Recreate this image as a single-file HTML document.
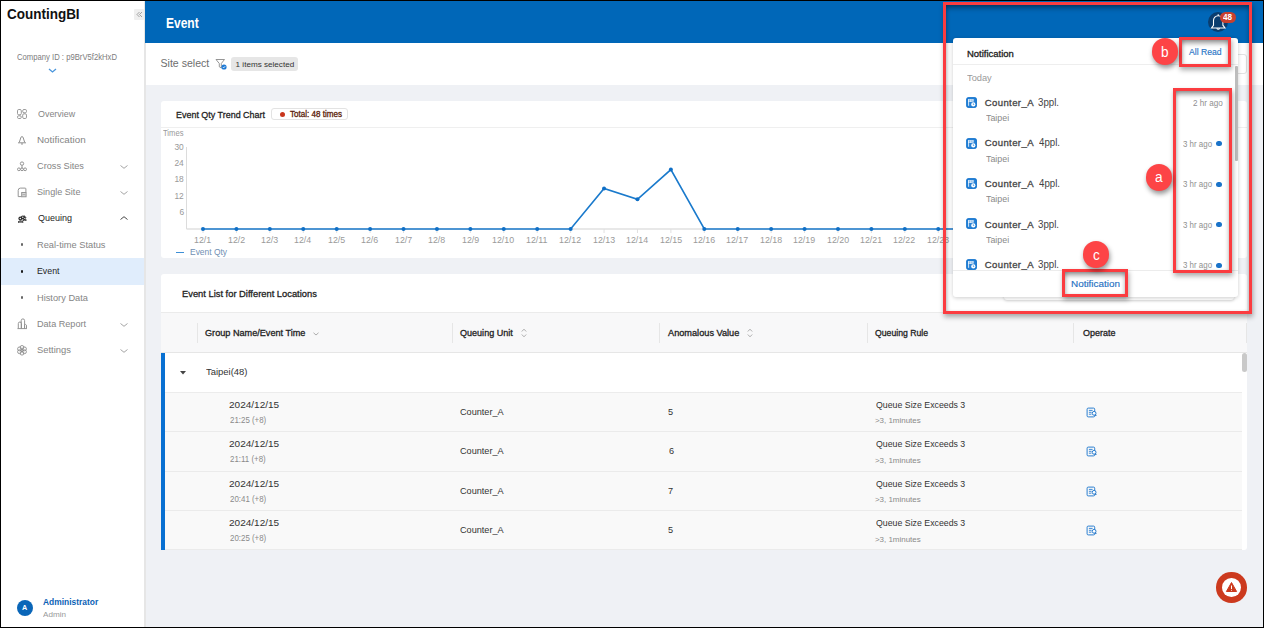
<!DOCTYPE html>
<html><head><meta charset="utf-8"><style>
html,body{margin:0;padding:0;width:1264px;height:628px;overflow:hidden;background:#fff}
.a{position:absolute}
.t{position:absolute;line-height:1;white-space:nowrap;font-family:"Liberation Sans",sans-serif;transform-origin:0 0}
</style></head><body>
<div class="a" style="left:1.00px;top:1.00px;width:143.00px;height:626.00px;background:#fff"></div>
<div class="a" style="left:144.00px;top:1.00px;width:2.00px;height:626.00px;background:#e6e6e6"></div>
<div class="t" style="left:6.89px;top:7px;font-size:14.783px;color:#111;font-weight:700;transform:scaleX(0.9128);">CountingBI</div>
<div class="a" style="left:134.00px;top:9.00px;width:10.00px;height:11.00px;background:#efefef;border-radius:1px"></div>
<svg class="a" style="left:136px;top:11px" width="7" height="7" viewBox="0 0 7 7"><path d="M3.5 1 L1 3.5 L3.5 6 M6 1 L3.5 3.5 L6 6" fill="none" stroke="#9a9a9a" stroke-width="0.9"/></svg>
<div class="t" style="left:16.80px;top:53px;font-size:8.696px;color:#7d7d7d;font-weight:400;transform:scaleX(0.8850);">Company ID : p9BrV5f2kHxD</div>
<svg class="a" style="left:48px;top:68px" width="9" height="5" viewBox="0 0 9 5"><path d="M1 1 L4.5 4 L8 1" fill="none" stroke="#4a96dc" stroke-width="1.3"/></svg>
<div class="a" style="left:1.00px;top:258.40px;width:143.00px;height:26.40px;background:#e0edfc"></div>
<div class="t" style="left:38.00px;top:109px;font-size:9.42px;color:#858585;font-weight:400;transform:scaleX(0.9487);">Overview</div>
<div class="t" style="left:36.96px;top:135px;font-size:9.42px;color:#858585;font-weight:400;transform:scaleX(1.0444);">Notification</div>
<div class="t" style="left:37.02px;top:161px;font-size:9.42px;color:#858585;font-weight:400;transform:scaleX(0.9766);">Cross Sites</div>
<div class="t" style="left:37.03px;top:187px;font-size:9.42px;color:#858585;font-weight:400;transform:scaleX(0.9659);">Single Site</div>
<div class="t" style="left:38.00px;top:213px;font-size:9.42px;color:#262626;font-weight:400;transform:scaleX(0.9571);">Queuing</div>
<div class="t" style="left:37.01px;top:240px;font-size:9.42px;color:#858585;font-weight:400;transform:scaleX(0.9853);">Real-time Status</div>
<div class="t" style="left:37.07px;top:266px;font-size:9.42px;color:#262626;font-weight:400;transform:scaleX(0.9348);">Event</div>
<div class="t" style="left:37.02px;top:293px;font-size:9.42px;color:#858585;font-weight:400;transform:scaleX(0.9843);">History Data</div>
<div class="t" style="left:37.03px;top:319px;font-size:9.42px;color:#858585;font-weight:400;transform:scaleX(0.9660);">Data Report</div>
<div class="t" style="left:37.00px;top:345px;font-size:9.42px;color:#858585;font-weight:400;">Settings</div>
<svg class="a" style="left:17px;top:109px" width="10" height="10" viewBox="0 0 10 10"><g fill="none" stroke="#8f8f8f" stroke-width="0.9"><rect x="0.5" y="0.5" width="3.8" height="5.3" rx="1.3"/><rect x="5.7" y="0.5" width="3.8" height="3.3" rx="1.3"/><rect x="0.5" y="6.8" width="3.8" height="2.7" rx="1.2"/><rect x="5.7" y="4.8" width="3.8" height="4.7" rx="1.3"/></g></svg>
<svg class="a" style="left:17px;top:135px" width="10" height="11" viewBox="0 0 10 11"><g fill="none" stroke="#8f8f8f" stroke-width="1"><path d="M5 1.4 Q5.7 1.4 6.3 3 L7.6 7.1 L8.6 7.8 H1.4 L2.4 7.1 L3.7 3 Q4.3 1.4 5 1.4 Z"/><path d="M4 8.6 Q5 10 6 8.6"/></g></svg>
<svg class="a" style="left:17px;top:161px" width="10" height="11" viewBox="0 0 10 11"><g fill="none" stroke="#8f8f8f" stroke-width="0.95"><circle cx="5" cy="2.6" r="1.7"/><path d="M5 4.3 V7.5"/><circle cx="1.9" cy="8.3" r="1.4"/><circle cx="5" cy="8.3" r="1.4"/><circle cx="8.1" cy="8.3" r="1.4"/></g></svg>
<svg class="a" style="left:17px;top:187px" width="10" height="11" viewBox="0 0 10 11"><g fill="none" stroke="#8f8f8f" stroke-width="0.95"><path d="M1.2 9.6 V3.4 A2.3 2.3 0 0 1 3.5 1.1 H8.1 A0.8 0.8 0 0 1 8.9 1.9 V5.2"/><path d="M1.2 9.6 H4.6"/></g><rect x="4.7" y="5.5" width="4.4" height="4.3" fill="#d8d8d8" stroke="#8f8f8f" stroke-width="0.9"/><path d="M5.5 7.6 H8.3" stroke="#8f8f8f" stroke-width="0.6"/></svg>
<svg class="a" style="left:17px;top:213px" width="11" height="11" viewBox="0 0 11 11"><g fill="#2a2a2a"><circle cx="3.3" cy="5.5" r="1.9"/><circle cx="5.8" cy="4.3" r="1.9"/><path d="M7 2 L9.5 4.5 L8.5 6 L6.5 4 Z" opacity="0.8"/><path d="M1 8.4 Q3.5 6.6 6.3 8.4 V9.8 H1 Z"/><path d="M5 7 Q7.5 5.2 9.8 6.8 L9.2 8 Q7.5 7 6.2 8 Z"/></g><circle cx="3.3" cy="5.5" r="0.7" fill="#fff"/><circle cx="5.8" cy="4.3" r="0.7" fill="#fff"/><path d="M2 9 H5.3" stroke="#fff" stroke-width="0.6"/></svg>
<div class="a" style="left:20.90px;top:243.30px;width:2.40px;height:2.40px;background:#666;border-radius:50%"></div>
<div class="a" style="left:20.90px;top:270.30px;width:2.40px;height:2.40px;background:#1a1a1a;border-radius:50%"></div>
<div class="a" style="left:20.90px;top:296.40px;width:2.40px;height:2.40px;background:#666;border-radius:50%"></div>
<svg class="a" style="left:17px;top:318px" width="11" height="12" viewBox="0 0 11 12"><g fill="none" stroke="#8f8f8f" stroke-width="0.95"><path d="M1.3 10.5 V5.6 A1.6 1.6 0 0 1 4.5 5.6 V10.5"/><path d="M4.2 10.5 V2.6 A1.7 1.7 0 0 1 7.6 2.6 V10.5"/><path d="M7.5 10.5 V7.2 A1.2 1.2 0 0 1 9.5 7.2 V10.5"/><path d="M0.5 10.6 H9.9"/></g></svg>
<svg class="a" style="left:17px;top:345px" width="11" height="11" viewBox="0 0 11 11"><g fill="none" stroke="#8f8f8f" stroke-width="0.9"><circle cx="5.00" cy="8.20" r="1.9"/><circle cx="2.49" cy="6.75" r="1.9"/><circle cx="2.49" cy="3.85" r="1.9"/><circle cx="5.00" cy="2.40" r="1.9"/><circle cx="7.51" cy="3.85" r="1.9"/><circle cx="7.51" cy="6.75" r="1.9"/><circle cx="5" cy="5.3" r="1.1"/></g></svg>
<svg class="a" style="left:120px;top:164.60000000000002px" width="8" height="4" viewBox="0 0 8 4"><path d="M0.5 0.5 L4 3.3 L7.5 0.5" fill="none" stroke="#9a9a9a" stroke-width="0.9"/></svg>
<svg class="a" style="left:120px;top:191.10000000000002px" width="8" height="4" viewBox="0 0 8 4"><path d="M0.5 0.5 L4 3.3 L7.5 0.5" fill="none" stroke="#9a9a9a" stroke-width="0.9"/></svg>
<svg class="a" style="left:120px;top:322.6px" width="8" height="4" viewBox="0 0 8 4"><path d="M0.5 0.5 L4 3.3 L7.5 0.5" fill="none" stroke="#9a9a9a" stroke-width="0.9"/></svg>
<svg class="a" style="left:120px;top:349.0px" width="8" height="4" viewBox="0 0 8 4"><path d="M0.5 0.5 L4 3.3 L7.5 0.5" fill="none" stroke="#9a9a9a" stroke-width="0.9"/></svg>
<svg class="a" style="left:120px;top:215.8px" width="8" height="4" viewBox="0 0 8 4"><path d="M0.5 3.5 L4 0.7 L7.5 3.5" fill="none" stroke="#333" stroke-width="0.9"/></svg>
<div class="a" style="left:16.60px;top:599.80px;width:16.00px;height:16.00px;background:#0a66b8;border-radius:50%"></div>
<div class="t" style="left:22.10px;top:604px;font-size:7.246px;color:#fff;font-weight:700;">A</div>
<div class="t" style="left:43.20px;top:598px;font-size:9.275px;color:#0b62b5;font-weight:700;transform:scaleX(0.9082);">Administrator</div>
<div class="t" style="left:43.20px;top:611px;font-size:7.681px;color:#999;font-weight:400;transform:scaleX(1.0571);">Admin</div>
<div class="a" style="left:145.00px;top:1.00px;width:1118.00px;height:42.00px;background:#0067b8"></div>
<div class="t" style="left:166.16px;top:16px;font-size:14.348px;color:#fff;font-weight:700;transform:scaleX(0.8368);">Event</div>
<div class="a" style="left:146.00px;top:43.00px;width:1117.00px;height:42.00px;background:#fff"></div>
<div class="a" style="left:146.00px;top:85.00px;width:1117.00px;height:542.00px;background:#eff1f5"></div>
<div class="t" style="left:160.50px;top:58px;font-size:10.58px;color:#6e6e6e;font-weight:400;">Site select</div>
<svg class="a" style="left:215px;top:58px" width="12" height="12" viewBox="0 0 12 12"><path d="M1 1.5 H9.5 L6.3 5.5 V10 L4.3 8.8 V5.5 Z" fill="none" stroke="#8a8a8a" stroke-width="0.9"/><circle cx="9" cy="9" r="2.6" fill="#1e7ad6"/><path d="M7.8 9 L8.7 9.9 L10.2 8.2" fill="none" stroke="#fff" stroke-width="0.8"/></svg>
<div class="a" style="left:231.10px;top:57.20px;width:67.30px;height:13.40px;background:#e6e6e6;border-radius:3px"></div>
<div class="t" style="left:235.60px;top:61px;font-size:8.116px;color:#333;font-weight:400;">1 items selected</div>
<div class="a" style="left:1000.00px;top:53.60px;width:247.00px;height:20.80px;background:#fff;border:1px solid #e2e2e2;border-radius:3px;box-sizing:border-box"></div>
<div class="a" style="left:161.00px;top:101.00px;width:1086.00px;height:157.00px;background:#fff;border-radius:3px"></div>
<div class="t" style="left:176.29px;top:110px;font-size:9.855px;color:#222;font-weight:400;transform:scaleX(0.9082);-webkit-text-stroke-width:0.3px;">Event Qty Trend Chart</div>
<div class="a" style="left:271.30px;top:107.50px;width:76.30px;height:12.90px;border:1px solid #e3e3e3;border-radius:3px;box-sizing:border-box"></div>
<div class="a" style="left:279.50px;top:111.80px;width:5.00px;height:5.00px;background:#c9361c;border-radius:50%"></div>
<div class="t" style="left:289.90px;top:110px;font-size:8.551px;color:#5a1d08;font-weight:400;transform:scaleX(0.9436);-webkit-text-stroke-width:0.3px;">Total: 48 times</div>
<div class="a" style="left:161.00px;top:127.00px;width:1086.00px;height:1.00px;background:#efefef"></div>
<div class="t" style="left:162.60px;top:129px;font-size:8.986px;color:#999;font-weight:400;transform:scaleX(0.8500);">Times</div>
<div class="t" style="left:174.40px;top:143px;font-size:8.406px;color:#999;font-weight:400;">30</div>
<div class="t" style="left:174.40px;top:159px;font-size:8.406px;color:#999;font-weight:400;">24</div>
<div class="t" style="left:174.40px;top:175px;font-size:8.406px;color:#999;font-weight:400;">18</div>
<div class="t" style="left:174.40px;top:192px;font-size:8.406px;color:#999;font-weight:400;">12</div>
<div class="t" style="left:179.40px;top:208px;font-size:8.406px;color:#999;font-weight:400;">6</div>
<svg class="a" style="left:0;top:0" width="1264" height="628"><path d="M186.5 147 V229.0" stroke="#dcdcdc" stroke-width="1"/><path d="M186.5 229.0 H1226" stroke="#e0e0e0" stroke-width="1.3"/><path d="M203.00 229.0 V233.0" stroke="#e0e0e0" stroke-width="1"/><path d="M236.42 229.0 V233.0" stroke="#e0e0e0" stroke-width="1"/><path d="M269.84 229.0 V233.0" stroke="#e0e0e0" stroke-width="1"/><path d="M303.26 229.0 V233.0" stroke="#e0e0e0" stroke-width="1"/><path d="M336.68 229.0 V233.0" stroke="#e0e0e0" stroke-width="1"/><path d="M370.10 229.0 V233.0" stroke="#e0e0e0" stroke-width="1"/><path d="M403.52 229.0 V233.0" stroke="#e0e0e0" stroke-width="1"/><path d="M436.94 229.0 V233.0" stroke="#e0e0e0" stroke-width="1"/><path d="M470.36 229.0 V233.0" stroke="#e0e0e0" stroke-width="1"/><path d="M503.78 229.0 V233.0" stroke="#e0e0e0" stroke-width="1"/><path d="M537.20 229.0 V233.0" stroke="#e0e0e0" stroke-width="1"/><path d="M570.62 229.0 V233.0" stroke="#e0e0e0" stroke-width="1"/><path d="M604.04 229.0 V233.0" stroke="#e0e0e0" stroke-width="1"/><path d="M637.46 229.0 V233.0" stroke="#e0e0e0" stroke-width="1"/><path d="M670.88 229.0 V233.0" stroke="#e0e0e0" stroke-width="1"/><path d="M704.30 229.0 V233.0" stroke="#e0e0e0" stroke-width="1"/><path d="M737.72 229.0 V233.0" stroke="#e0e0e0" stroke-width="1"/><path d="M771.14 229.0 V233.0" stroke="#e0e0e0" stroke-width="1"/><path d="M804.56 229.0 V233.0" stroke="#e0e0e0" stroke-width="1"/><path d="M837.98 229.0 V233.0" stroke="#e0e0e0" stroke-width="1"/><path d="M871.40 229.0 V233.0" stroke="#e0e0e0" stroke-width="1"/><path d="M904.82 229.0 V233.0" stroke="#e0e0e0" stroke-width="1"/><path d="M938.24 229.0 V233.0" stroke="#e0e0e0" stroke-width="1"/><path d="M971.66 229.0 V233.0" stroke="#e0e0e0" stroke-width="1"/><path d="M1005.08 229.0 V233.0" stroke="#e0e0e0" stroke-width="1"/><path d="M1038.50 229.0 V233.0" stroke="#e0e0e0" stroke-width="1"/><path d="M1071.92 229.0 V233.0" stroke="#e0e0e0" stroke-width="1"/><path d="M1105.34 229.0 V233.0" stroke="#e0e0e0" stroke-width="1"/><path d="M1138.76 229.0 V233.0" stroke="#e0e0e0" stroke-width="1"/><path d="M1172.18 229.0 V233.0" stroke="#e0e0e0" stroke-width="1"/><path d="M1205.60 229.0 V233.0" stroke="#e0e0e0" stroke-width="1"/><path d="M203.00 229.00 L236.42 229.00 L269.84 229.00 L303.26 229.00 L336.68 229.00 L370.10 229.00 L403.52 229.00 L436.94 229.00 L470.36 229.00 L503.78 229.00 L537.20 229.00 L570.62 229.00 L604.04 188.50 L637.46 199.30 L670.88 169.60 L704.30 229.00 L737.72 229.00 L771.14 229.00 L804.56 229.00 L837.98 229.00 L871.40 229.00 L904.82 229.00 L938.24 229.00 L971.66 229.00 L1005.08 229.00 L1038.50 229.00 L1071.92 229.00 L1105.34 229.00 L1138.76 229.00 L1172.18 229.00 L1205.60 229.00" fill="none" stroke="#1a7acc" stroke-width="1.6"/><circle cx="203.00" cy="229.00" r="2" fill="#0f6fc6"/><circle cx="236.42" cy="229.00" r="2" fill="#0f6fc6"/><circle cx="269.84" cy="229.00" r="2" fill="#0f6fc6"/><circle cx="303.26" cy="229.00" r="2" fill="#0f6fc6"/><circle cx="336.68" cy="229.00" r="2" fill="#0f6fc6"/><circle cx="370.10" cy="229.00" r="2" fill="#0f6fc6"/><circle cx="403.52" cy="229.00" r="2" fill="#0f6fc6"/><circle cx="436.94" cy="229.00" r="2" fill="#0f6fc6"/><circle cx="470.36" cy="229.00" r="2" fill="#0f6fc6"/><circle cx="503.78" cy="229.00" r="2" fill="#0f6fc6"/><circle cx="537.20" cy="229.00" r="2" fill="#0f6fc6"/><circle cx="570.62" cy="229.00" r="2" fill="#0f6fc6"/><circle cx="604.04" cy="188.50" r="2" fill="#0f6fc6"/><circle cx="637.46" cy="199.30" r="2" fill="#0f6fc6"/><circle cx="670.88" cy="169.60" r="2" fill="#0f6fc6"/><circle cx="704.30" cy="229.00" r="2" fill="#0f6fc6"/><circle cx="737.72" cy="229.00" r="2" fill="#0f6fc6"/><circle cx="771.14" cy="229.00" r="2" fill="#0f6fc6"/><circle cx="804.56" cy="229.00" r="2" fill="#0f6fc6"/><circle cx="837.98" cy="229.00" r="2" fill="#0f6fc6"/><circle cx="871.40" cy="229.00" r="2" fill="#0f6fc6"/><circle cx="904.82" cy="229.00" r="2" fill="#0f6fc6"/><circle cx="938.24" cy="229.00" r="2" fill="#0f6fc6"/><circle cx="971.66" cy="229.00" r="2" fill="#0f6fc6"/><circle cx="1005.08" cy="229.00" r="2" fill="#0f6fc6"/><circle cx="1038.50" cy="229.00" r="2" fill="#0f6fc6"/><circle cx="1071.92" cy="229.00" r="2" fill="#0f6fc6"/><circle cx="1105.34" cy="229.00" r="2" fill="#0f6fc6"/><circle cx="1138.76" cy="229.00" r="2" fill="#0f6fc6"/><circle cx="1172.18" cy="229.00" r="2" fill="#0f6fc6"/><circle cx="1205.60" cy="229.00" r="2" fill="#0f6fc6"/></svg>
<div class="t" style="left:194.22px;top:236px;font-size:8.551px;color:#9a9a9a;font-weight:400;transform:scaleX(1.0333);">12/1</div>
<div class="t" style="left:227.64px;top:236px;font-size:8.551px;color:#9a9a9a;font-weight:400;transform:scaleX(1.0333);">12/2</div>
<div class="t" style="left:261.06px;top:236px;font-size:8.551px;color:#9a9a9a;font-weight:400;transform:scaleX(1.0333);">12/3</div>
<div class="t" style="left:294.48px;top:236px;font-size:8.551px;color:#9a9a9a;font-weight:400;transform:scaleX(1.0333);">12/4</div>
<div class="t" style="left:327.90px;top:236px;font-size:8.551px;color:#9a9a9a;font-weight:400;transform:scaleX(1.0333);">12/5</div>
<div class="t" style="left:361.32px;top:236px;font-size:8.551px;color:#9a9a9a;font-weight:400;transform:scaleX(1.0333);">12/6</div>
<div class="t" style="left:394.74px;top:236px;font-size:8.551px;color:#9a9a9a;font-weight:400;transform:scaleX(1.0333);">12/7</div>
<div class="t" style="left:428.16px;top:236px;font-size:8.551px;color:#9a9a9a;font-weight:400;transform:scaleX(1.0333);">12/8</div>
<div class="t" style="left:461.58px;top:236px;font-size:8.551px;color:#9a9a9a;font-weight:400;transform:scaleX(1.0333);">12/9</div>
<div class="t" style="left:492.41px;top:236px;font-size:8.551px;color:#9a9a9a;font-weight:400;transform:scaleX(1.0333);">12/10</div>
<div class="t" style="left:526.35px;top:236px;font-size:8.551px;color:#9a9a9a;font-weight:400;transform:scaleX(1.0333);">12/11</div>
<div class="t" style="left:559.25px;top:236px;font-size:8.551px;color:#9a9a9a;font-weight:400;transform:scaleX(1.0333);">12/12</div>
<div class="t" style="left:592.67px;top:236px;font-size:8.551px;color:#9a9a9a;font-weight:400;transform:scaleX(1.0333);">12/13</div>
<div class="t" style="left:626.09px;top:236px;font-size:8.551px;color:#9a9a9a;font-weight:400;transform:scaleX(1.0333);">12/14</div>
<div class="t" style="left:659.51px;top:236px;font-size:8.551px;color:#9a9a9a;font-weight:400;transform:scaleX(1.0333);">12/15</div>
<div class="t" style="left:692.93px;top:236px;font-size:8.551px;color:#9a9a9a;font-weight:400;transform:scaleX(1.0333);">12/16</div>
<div class="t" style="left:726.35px;top:236px;font-size:8.551px;color:#9a9a9a;font-weight:400;transform:scaleX(1.0333);">12/17</div>
<div class="t" style="left:759.77px;top:236px;font-size:8.551px;color:#9a9a9a;font-weight:400;transform:scaleX(1.0333);">12/18</div>
<div class="t" style="left:793.19px;top:236px;font-size:8.551px;color:#9a9a9a;font-weight:400;transform:scaleX(1.0333);">12/19</div>
<div class="t" style="left:826.61px;top:236px;font-size:8.551px;color:#9a9a9a;font-weight:400;transform:scaleX(1.0333);">12/20</div>
<div class="t" style="left:860.03px;top:236px;font-size:8.551px;color:#9a9a9a;font-weight:400;transform:scaleX(1.0333);">12/21</div>
<div class="t" style="left:893.45px;top:236px;font-size:8.551px;color:#9a9a9a;font-weight:400;transform:scaleX(1.0333);">12/22</div>
<div class="t" style="left:926.87px;top:236px;font-size:8.551px;color:#9a9a9a;font-weight:400;transform:scaleX(1.0333);">12/23</div>
<div class="t" style="left:960.29px;top:236px;font-size:8.551px;color:#9a9a9a;font-weight:400;transform:scaleX(1.0333);">12/24</div>
<div class="t" style="left:993.71px;top:236px;font-size:8.551px;color:#9a9a9a;font-weight:400;transform:scaleX(1.0333);">12/25</div>
<div class="t" style="left:1027.13px;top:236px;font-size:8.551px;color:#9a9a9a;font-weight:400;transform:scaleX(1.0333);">12/26</div>
<div class="t" style="left:1060.55px;top:236px;font-size:8.551px;color:#9a9a9a;font-weight:400;transform:scaleX(1.0333);">12/27</div>
<div class="t" style="left:1093.97px;top:236px;font-size:8.551px;color:#9a9a9a;font-weight:400;transform:scaleX(1.0333);">12/28</div>
<div class="t" style="left:1127.39px;top:236px;font-size:8.551px;color:#9a9a9a;font-weight:400;transform:scaleX(1.0333);">12/29</div>
<div class="t" style="left:1160.81px;top:236px;font-size:8.551px;color:#9a9a9a;font-weight:400;transform:scaleX(1.0333);">12/30</div>
<div class="t" style="left:1194.23px;top:236px;font-size:8.551px;color:#9a9a9a;font-weight:400;transform:scaleX(1.0333);">12/31</div>
<div class="a" style="left:176.30px;top:252.00px;width:8.00px;height:1.20px;background:#3d8fd6"></div>
<div class="t" style="left:189.96px;top:248px;font-size:8.986px;color:#6f8fb3;font-weight:400;transform:scaleX(0.9421);">Event Qty</div>
<div class="a" style="left:161.00px;top:274.00px;width:1086.00px;height:276.40px;background:#fff;border-radius:3px"></div>
<div class="t" style="left:181.54px;top:289px;font-size:9.71px;color:#222;font-weight:400;transform:scaleX(0.9626);-webkit-text-stroke-width:0.3px;">Event List for Different Locations</div>
<div class="a" style="left:161.00px;top:312.00px;width:1086.00px;height:40.70px;background:#f8f8f9;border-top:1px solid #ebebeb;border-bottom:1px solid #e6e6e6;box-sizing:border-box"></div>
<div class="a" style="left:197.00px;top:323.00px;width:1.00px;height:19.70px;background:#e6e6e6"></div>
<div class="a" style="left:451.70px;top:323.00px;width:1.00px;height:19.70px;background:#e6e6e6"></div>
<div class="a" style="left:659.10px;top:323.00px;width:1.00px;height:19.70px;background:#e6e6e6"></div>
<div class="a" style="left:866.50px;top:323.00px;width:1.00px;height:19.70px;background:#e6e6e6"></div>
<div class="a" style="left:1073.00px;top:323.00px;width:1.00px;height:19.70px;background:#e6e6e6"></div>
<div class="a" style="left:1246.00px;top:323.00px;width:1.00px;height:19.70px;background:#e6e6e6"></div>
<div class="t" style="left:205.10px;top:329px;font-size:9.275px;color:#222;font-weight:400;transform:scaleX(0.9843);-webkit-text-stroke-width:0.3px;">Group Name/Event Time</div>
<div class="t" style="left:460.40px;top:329px;font-size:9.275px;color:#222;font-weight:400;transform:scaleX(0.9759);-webkit-text-stroke-width:0.3px;">Queuing Unit</div>
<div class="t" style="left:668.00px;top:329px;font-size:9.275px;color:#222;font-weight:400;transform:scaleX(0.9917);-webkit-text-stroke-width:0.3px;">Anomalous Value</div>
<div class="t" style="left:875.30px;top:329px;font-size:9.275px;color:#222;font-weight:400;transform:scaleX(0.9368);-webkit-text-stroke-width:0.3px;">Queuing Rule</div>
<div class="t" style="left:1082.80px;top:329px;font-size:9.275px;color:#222;font-weight:400;transform:scaleX(0.9667);-webkit-text-stroke-width:0.3px;">Operate</div>
<svg class="a" style="left:313px;top:332px" width="6" height="4" viewBox="0 0 6 4"><path d="M0.5 0.8 L3 3 L5.5 0.8" fill="none" stroke="#999" stroke-width="0.8"/></svg>
<svg class="a" style="left:520.5px;top:328px" width="6" height="10" viewBox="0 0 6 10"><path d="M0.8 3.5 L3 1.2 L5.2 3.5 M0.8 6.5 L3 8.8 L5.2 6.5" fill="none" stroke="#999" stroke-width="0.8"/></svg>
<svg class="a" style="left:747.3px;top:328px" width="6" height="10" viewBox="0 0 6 10"><path d="M0.8 3.5 L3 1.2 L5.2 3.5 M0.8 6.5 L3 8.8 L5.2 6.5" fill="none" stroke="#999" stroke-width="0.8"/></svg>
<svg class="a" style="left:179.5px;top:370.5px" width="7" height="4" viewBox="0 0 7 4"><path d="M0 0 H6 L3 3.5 Z" fill="#444"/></svg>
<div class="t" style="left:206.40px;top:367px;font-size:9.565px;color:#333;font-weight:400;transform:scaleX(0.9902);">Taipei(48)</div>
<div class="a" style="left:165.00px;top:391.50px;width:1077.00px;height:1.00px;background:#ececec"></div>
<div class="a" style="left:165.00px;top:392.50px;width:1077.00px;height:39.00px;background:#f9f9f9"></div>
<div class="a" style="left:165.00px;top:431.00px;width:1077.00px;height:1.00px;background:#ebebeb"></div>
<div class="t" style="left:228.68px;top:400px;font-size:9.855px;color:#333;font-weight:400;transform:scaleX(1.0188);">2024/12/15</div>
<div class="t" style="left:229.70px;top:416px;font-size:8.406px;color:#8a8a8a;font-weight:400;transform:scaleX(0.9421);">21:25 (+8)</div>
<div class="t" style="left:459.93px;top:407px;font-size:9.42px;color:#333;font-weight:400;transform:scaleX(0.9705);">Counter_A</div>
<div class="t" style="left:875.90px;top:400px;font-size:9.42px;color:#333;font-weight:400;transform:scaleX(0.9326);">Queue Size Exceeds 3</div>
<div class="t" style="left:874.90px;top:417px;font-size:7.971px;color:#8a8a8a;font-weight:400;">&gt;3, 1minutes</div>
<div class="t" style="left:667.53px;top:407px;font-size:9.42px;color:#333;font-weight:400;transform:scaleX(0.9705);">5</div>
<svg class="a" style="left:1085.5px;top:406.5px" width="12" height="12" viewBox="0 0 12 12"><rect x="1.1" y="1.1" width="7.6" height="8.8" rx="1.1" fill="none" stroke="#2a7ed0" stroke-width="1"/><path d="M2.9 3.4 H6.6 M2.9 5.3 H5.6 M2.9 7.2 H5.4" stroke="#2a7ed0" stroke-width="0.9"/><circle cx="8.1" cy="6.3" r="1.9" fill="#fff" stroke="#2a7ed0" stroke-width="1"/><path d="M9.3 7.7 L10.2 8.8" stroke="#1f6fc0" stroke-width="1.2"/></svg>
<div class="a" style="left:165.00px;top:432.00px;width:1077.00px;height:39.00px;background:#f9f9f9"></div>
<div class="a" style="left:165.00px;top:470.50px;width:1077.00px;height:1.00px;background:#ebebeb"></div>
<div class="t" style="left:228.68px;top:439px;font-size:9.855px;color:#333;font-weight:400;transform:scaleX(1.0188);">2024/12/15</div>
<div class="t" style="left:229.70px;top:455px;font-size:8.406px;color:#8a8a8a;font-weight:400;transform:scaleX(0.9421);">21:11 (+8)</div>
<div class="t" style="left:459.93px;top:446px;font-size:9.42px;color:#333;font-weight:400;transform:scaleX(0.9705);">Counter_A</div>
<div class="t" style="left:875.90px;top:439px;font-size:9.42px;color:#333;font-weight:400;transform:scaleX(0.9326);">Queue Size Exceeds 3</div>
<div class="t" style="left:874.90px;top:457px;font-size:7.971px;color:#8a8a8a;font-weight:400;">&gt;3, 1minutes</div>
<div class="t" style="left:668.50px;top:446px;font-size:9.42px;color:#333;font-weight:400;transform:scaleX(0.9705);">6</div>
<svg class="a" style="left:1085.5px;top:446.0px" width="12" height="12" viewBox="0 0 12 12"><rect x="1.1" y="1.1" width="7.6" height="8.8" rx="1.1" fill="none" stroke="#2a7ed0" stroke-width="1"/><path d="M2.9 3.4 H6.6 M2.9 5.3 H5.6 M2.9 7.2 H5.4" stroke="#2a7ed0" stroke-width="0.9"/><circle cx="8.1" cy="6.3" r="1.9" fill="#fff" stroke="#2a7ed0" stroke-width="1"/><path d="M9.3 7.7 L10.2 8.8" stroke="#1f6fc0" stroke-width="1.2"/></svg>
<div class="a" style="left:165.00px;top:471.50px;width:1077.00px;height:38.80px;background:#f9f9f9"></div>
<div class="a" style="left:165.00px;top:509.80px;width:1077.00px;height:1.00px;background:#ebebeb"></div>
<div class="t" style="left:228.68px;top:479px;font-size:9.855px;color:#333;font-weight:400;transform:scaleX(1.0188);">2024/12/15</div>
<div class="t" style="left:229.70px;top:495px;font-size:8.406px;color:#8a8a8a;font-weight:400;transform:scaleX(0.9421);">20:41 (+8)</div>
<div class="t" style="left:459.93px;top:486px;font-size:9.42px;color:#333;font-weight:400;transform:scaleX(0.9705);">Counter_A</div>
<div class="t" style="left:875.90px;top:479px;font-size:9.42px;color:#333;font-weight:400;transform:scaleX(0.9326);">Queue Size Exceeds 3</div>
<div class="t" style="left:874.90px;top:496px;font-size:7.971px;color:#8a8a8a;font-weight:400;">&gt;3, 1minutes</div>
<div class="t" style="left:667.53px;top:486px;font-size:9.42px;color:#333;font-weight:400;transform:scaleX(0.9705);">7</div>
<svg class="a" style="left:1085.5px;top:485.5px" width="12" height="12" viewBox="0 0 12 12"><rect x="1.1" y="1.1" width="7.6" height="8.8" rx="1.1" fill="none" stroke="#2a7ed0" stroke-width="1"/><path d="M2.9 3.4 H6.6 M2.9 5.3 H5.6 M2.9 7.2 H5.4" stroke="#2a7ed0" stroke-width="0.9"/><circle cx="8.1" cy="6.3" r="1.9" fill="#fff" stroke="#2a7ed0" stroke-width="1"/><path d="M9.3 7.7 L10.2 8.8" stroke="#1f6fc0" stroke-width="1.2"/></svg>
<div class="a" style="left:165.00px;top:510.80px;width:1077.00px;height:39.00px;background:#f9f9f9"></div>
<div class="a" style="left:165.00px;top:549.30px;width:1077.00px;height:1.00px;background:#ebebeb"></div>
<div class="t" style="left:228.68px;top:518px;font-size:9.855px;color:#333;font-weight:400;transform:scaleX(1.0188);">2024/12/15</div>
<div class="t" style="left:229.70px;top:534px;font-size:8.406px;color:#8a8a8a;font-weight:400;transform:scaleX(0.9421);">20:25 (+8)</div>
<div class="t" style="left:459.93px;top:525px;font-size:9.42px;color:#333;font-weight:400;transform:scaleX(0.9705);">Counter_A</div>
<div class="t" style="left:875.90px;top:518px;font-size:9.42px;color:#333;font-weight:400;transform:scaleX(0.9326);">Queue Size Exceeds 3</div>
<div class="t" style="left:874.90px;top:536px;font-size:7.971px;color:#8a8a8a;font-weight:400;">&gt;3, 1minutes</div>
<div class="t" style="left:667.53px;top:525px;font-size:9.42px;color:#333;font-weight:400;transform:scaleX(0.9705);">5</div>
<svg class="a" style="left:1085.5px;top:524.8px" width="12" height="12" viewBox="0 0 12 12"><rect x="1.1" y="1.1" width="7.6" height="8.8" rx="1.1" fill="none" stroke="#2a7ed0" stroke-width="1"/><path d="M2.9 3.4 H6.6 M2.9 5.3 H5.6 M2.9 7.2 H5.4" stroke="#2a7ed0" stroke-width="0.9"/><circle cx="8.1" cy="6.3" r="1.9" fill="#fff" stroke="#2a7ed0" stroke-width="1"/><path d="M9.3 7.7 L10.2 8.8" stroke="#1f6fc0" stroke-width="1.2"/></svg>
<div class="a" style="left:161.00px;top:352.70px;width:4.20px;height:197.10px;background:#0870d2"></div>
<div class="a" style="left:1242.00px;top:352.70px;width:5.00px;height:19.80px;background:#c9c9c9;border-radius:3px"></div>
<div class="a" style="left:1216.20px;top:572.40px;width:30.40px;height:30.40px;background:#cc3a1e;border-radius:50%"></div>
<div class="a" style="left:1222.00px;top:578.20px;width:18.80px;height:18.80px;background:#fff;border-radius:50%"></div>
<svg class="a" style="left:1225px;top:581px" width="13" height="12" viewBox="0 0 13 12"><path d="M6.5 1.5 L11.6 10.5 H1.4 Z" fill="#cc3a1e" stroke="#cc3a1e" stroke-width="1" stroke-linejoin="round"/><path d="M6.5 4.5 V8" stroke="#fff" stroke-width="1"/><circle cx="6.5" cy="9.3" r="0.5" fill="#fff"/></svg>
<div class="a" style="left:1208.30px;top:11.80px;width:20.00px;height:20.00px;background:#0a3d6e;border-radius:50%"></div>
<svg class="a" style="left:1210px;top:13px" width="17" height="18" viewBox="0 0 17 18"><g fill="none" stroke="#fff" stroke-width="1.1"><path d="M8.2 1.3 V2.4 M3.5 12.2 V7.5 A4.7 4.7 0 0 1 12.9 7.5 V12.2 L15 15 H1.5 L3.5 12.2 Z"/><path d="M6.8 15.2 A1.5 1.5 0 0 0 9.6 15.2"/></g></svg>
<div class="a" style="left:1220.00px;top:11.80px;width:15.80px;height:11.50px;background:#c8402e;border-radius:6px"></div>
<div class="t" style="left:1223.35px;top:14px;font-size:8.261px;color:#fff;font-weight:700;transform:scaleX(0.9889);">48</div>
<div class="a" style="left:1003.80px;top:60.00px;width:230.20px;height:240.20px;background:#fff;border-radius:3px;box-shadow:0 1px 3px rgba(0,0,0,0.18)"></div>
<div class="a" style="left:953.00px;top:38.20px;width:284.50px;height:258.40px;background:#fff;border-radius:3px;box-shadow:0 1px 4px rgba(0,0,0,0.2)"></div>
<div class="a" style="left:953.00px;top:64.20px;width:284.50px;height:1.00px;background:#eeeeee"></div>
<div class="t" style="left:967.00px;top:50px;font-size:9.275px;color:#222;font-weight:400;transform:scaleX(1.0217);-webkit-text-stroke-width:0.3px;">Notification</div>
<div class="t" style="left:1188.60px;top:48px;font-size:9.275px;color:#2a76c6;font-weight:400;transform:scaleX(0.9314);-webkit-text-stroke-width:0.15px;">All Read</div>
<div class="t" style="left:967.00px;top:73px;font-size:9.565px;color:#9a9a9a;font-weight:400;transform:scaleX(0.9720);">Today</div>
<div class="a" style="left:0;top:0;width:1264px;height:628px;clip-path:polygon(953px 65.2px,1237.5px 65.2px,1237.5px 270.2px,953px 270.2px)">
<svg class="a" style="left:966px;top:97px" width="11" height="11" viewBox="0 0 11 11"><rect x="0.3" y="0.3" width="10.5" height="10.5" rx="2" fill="#2a83d6"/><rect x="0.8" y="0.8" width="9.5" height="9.5" rx="1.6" fill="none" stroke="#0d6fcc" stroke-width="0.9"/><g stroke="#fff" stroke-width="0.8" fill="none"><path d="M2.6 2.3 V8.8 M4.8 2.3 V5 M7 2.3 V4.2 M2 2.8 H7.6 M2 4.2 H7.6"/></g><circle cx="7.3" cy="7.4" r="2.1" fill="#fff"/><path d="M7.3 6.3 V7.5 H8.2" stroke="#1f7fd8" stroke-width="0.7" fill="none"/></svg>
<div class="t" style="left:984.70px;top:98px;font-size:9.565px;color:#444;font-weight:400;-webkit-text-stroke-width:0.3px;letter-spacing:0.4px;">Counter_A</div>
<div class="t" style="left:1038.06px;top:98px;font-size:10.29px;color:#444;font-weight:400;transform:scaleX(0.9429);">3ppl.</div>
<div class="t" style="left:985.60px;top:114px;font-size:9.13px;color:#8a8a8a;font-weight:400;transform:scaleX(0.9696);">Taipei</div>
<div class="t" style="left:1193.00px;top:99px;font-size:8.406px;color:#8f8f8f;font-weight:400;transform:scaleX(0.9667);">2 hr ago</div>
<svg class="a" style="left:966px;top:138px" width="11" height="11" viewBox="0 0 11 11"><rect x="0.3" y="0.3" width="10.5" height="10.5" rx="2" fill="#2a83d6"/><rect x="0.8" y="0.8" width="9.5" height="9.5" rx="1.6" fill="none" stroke="#0d6fcc" stroke-width="0.9"/><g stroke="#fff" stroke-width="0.8" fill="none"><path d="M2.6 2.3 V8.8 M4.8 2.3 V5 M7 2.3 V4.2 M2 2.8 H7.6 M2 4.2 H7.6"/></g><circle cx="7.3" cy="7.4" r="2.1" fill="#fff"/><path d="M7.3 6.3 V7.5 H8.2" stroke="#1f7fd8" stroke-width="0.7" fill="none"/></svg>
<div class="t" style="left:984.70px;top:138px;font-size:9.565px;color:#444;font-weight:400;-webkit-text-stroke-width:0.3px;letter-spacing:0.4px;">Counter_A</div>
<div class="t" style="left:1039.00px;top:138px;font-size:10.29px;color:#444;font-weight:400;transform:scaleX(0.9429);">4ppl.</div>
<div class="t" style="left:985.60px;top:155px;font-size:9.13px;color:#8a8a8a;font-weight:400;transform:scaleX(0.9696);">Taipei</div>
<div class="t" style="left:1182.50px;top:140px;font-size:8.406px;color:#8f8f8f;font-weight:400;transform:scaleX(0.9433);">3 hr ago</div>
<div class="a" style="left:1216.40px;top:141.00px;width:5.40px;height:5.40px;background:#1a73c9;border-radius:50%"></div>
<svg class="a" style="left:966px;top:178px" width="11" height="11" viewBox="0 0 11 11"><rect x="0.3" y="0.3" width="10.5" height="10.5" rx="2" fill="#2a83d6"/><rect x="0.8" y="0.8" width="9.5" height="9.5" rx="1.6" fill="none" stroke="#0d6fcc" stroke-width="0.9"/><g stroke="#fff" stroke-width="0.8" fill="none"><path d="M2.6 2.3 V8.8 M4.8 2.3 V5 M7 2.3 V4.2 M2 2.8 H7.6 M2 4.2 H7.6"/></g><circle cx="7.3" cy="7.4" r="2.1" fill="#fff"/><path d="M7.3 6.3 V7.5 H8.2" stroke="#1f7fd8" stroke-width="0.7" fill="none"/></svg>
<div class="t" style="left:984.70px;top:179px;font-size:9.565px;color:#444;font-weight:400;-webkit-text-stroke-width:0.3px;letter-spacing:0.4px;">Counter_A</div>
<div class="t" style="left:1039.00px;top:179px;font-size:10.29px;color:#444;font-weight:400;transform:scaleX(0.9429);">4ppl.</div>
<div class="t" style="left:985.60px;top:195px;font-size:9.13px;color:#8a8a8a;font-weight:400;transform:scaleX(0.9696);">Taipei</div>
<div class="t" style="left:1182.50px;top:180px;font-size:8.406px;color:#8f8f8f;font-weight:400;transform:scaleX(0.9433);">3 hr ago</div>
<div class="a" style="left:1216.40px;top:181.50px;width:5.40px;height:5.40px;background:#1a73c9;border-radius:50%"></div>
<svg class="a" style="left:966px;top:218px" width="11" height="11" viewBox="0 0 11 11"><rect x="0.3" y="0.3" width="10.5" height="10.5" rx="2" fill="#2a83d6"/><rect x="0.8" y="0.8" width="9.5" height="9.5" rx="1.6" fill="none" stroke="#0d6fcc" stroke-width="0.9"/><g stroke="#fff" stroke-width="0.8" fill="none"><path d="M2.6 2.3 V8.8 M4.8 2.3 V5 M7 2.3 V4.2 M2 2.8 H7.6 M2 4.2 H7.6"/></g><circle cx="7.3" cy="7.4" r="2.1" fill="#fff"/><path d="M7.3 6.3 V7.5 H8.2" stroke="#1f7fd8" stroke-width="0.7" fill="none"/></svg>
<div class="t" style="left:984.70px;top:220px;font-size:9.565px;color:#444;font-weight:400;-webkit-text-stroke-width:0.3px;letter-spacing:0.4px;">Counter_A</div>
<div class="t" style="left:1038.06px;top:220px;font-size:10.29px;color:#444;font-weight:400;transform:scaleX(0.9429);">3ppl.</div>
<div class="t" style="left:985.60px;top:236px;font-size:9.13px;color:#8a8a8a;font-weight:400;transform:scaleX(0.9696);">Taipei</div>
<div class="t" style="left:1182.50px;top:221px;font-size:8.406px;color:#8f8f8f;font-weight:400;transform:scaleX(0.9433);">3 hr ago</div>
<div class="a" style="left:1216.40px;top:222.00px;width:5.40px;height:5.40px;background:#1a73c9;border-radius:50%"></div>
<svg class="a" style="left:966px;top:259px" width="11" height="11" viewBox="0 0 11 11"><rect x="0.3" y="0.3" width="10.5" height="10.5" rx="2" fill="#2a83d6"/><rect x="0.8" y="0.8" width="9.5" height="9.5" rx="1.6" fill="none" stroke="#0d6fcc" stroke-width="0.9"/><g stroke="#fff" stroke-width="0.8" fill="none"><path d="M2.6 2.3 V8.8 M4.8 2.3 V5 M7 2.3 V4.2 M2 2.8 H7.6 M2 4.2 H7.6"/></g><circle cx="7.3" cy="7.4" r="2.1" fill="#fff"/><path d="M7.3 6.3 V7.5 H8.2" stroke="#1f7fd8" stroke-width="0.7" fill="none"/></svg>
<div class="t" style="left:984.70px;top:260px;font-size:9.565px;color:#444;font-weight:400;-webkit-text-stroke-width:0.3px;letter-spacing:0.4px;">Counter_A</div>
<div class="t" style="left:1038.06px;top:260px;font-size:10.29px;color:#444;font-weight:400;transform:scaleX(0.9429);">3ppl.</div>
<div class="t" style="left:985.60px;top:276px;font-size:9.13px;color:#8a8a8a;font-weight:400;transform:scaleX(0.9696);">Taipei</div>
<div class="t" style="left:1182.50px;top:261px;font-size:8.406px;color:#8f8f8f;font-weight:400;transform:scaleX(0.9433);">3 hr ago</div>
<div class="a" style="left:1216.40px;top:262.50px;width:5.40px;height:5.40px;background:#1a73c9;border-radius:50%"></div>
</div>
<div class="a" style="left:1235.00px;top:66.00px;width:3.00px;height:95.00px;background:#bdbdbd;border-radius:1px"></div>
<div class="a" style="left:953.00px;top:269.60px;width:284.50px;height:1.00px;background:#ececec"></div>
<div class="t" style="left:1070.80px;top:279px;font-size:9.855px;color:#1f70c2;font-weight:400;transform:scaleX(1.0043);-webkit-text-stroke-width:0.15px;">Notification</div>
<div class="a" style="left:943.00px;top:2.00px;width:309.00px;height:311.80px;border:3px solid #fb3c40;box-sizing:border-box;box-shadow:inset 0 5px 5px -2px rgba(0,0,0,0.42), inset 3px 0 4px -2px rgba(0,0,0,0.2), inset -3px 0 4px -2px rgba(0,0,0,0.14), 1px 3px 5px rgba(0,0,0,0.33)"></div>
<div class="a" style="left:1179.00px;top:37.20px;width:51.80px;height:29.40px;border:3px solid #fb3c40;box-sizing:border-box;box-shadow:inset 0 5px 5px -2px rgba(0,0,0,0.42), inset 3px 0 4px -2px rgba(0,0,0,0.2), inset -3px 0 4px -2px rgba(0,0,0,0.14), 1px 3px 5px rgba(0,0,0,0.33)"></div>
<div class="a" style="left:1173.00px;top:88.00px;width:59.00px;height:185.40px;border:3px solid #fb3c40;box-sizing:border-box;box-shadow:inset 0 5px 5px -2px rgba(0,0,0,0.42), inset 3px 0 4px -2px rgba(0,0,0,0.2), inset -3px 0 4px -2px rgba(0,0,0,0.14), 1px 3px 5px rgba(0,0,0,0.33)"></div>
<div class="a" style="left:1062.20px;top:269.00px;width:65.50px;height:27.60px;border:3px solid #fb3c40;box-sizing:border-box;box-shadow:inset 0 5px 5px -2px rgba(0,0,0,0.42), inset 3px 0 4px -2px rgba(0,0,0,0.2), inset -3px 0 4px -2px rgba(0,0,0,0.14), 1px 3px 5px rgba(0,0,0,0.33)"></div>
<div class="a" style="left:1151.75px;top:38.25px;width:26.50px;height:26.50px;background:#fd4446;border-radius:50%;box-shadow:1px 3px 5px rgba(0,0,0,0.42)"></div>
<div class="t" style="left:1161.14px;top:44px;font-size:15.5px;color:#fff;font-weight:400;transform:scaleX(0.8800);">b</div>
<div class="a" style="left:1145.75px;top:164.05px;width:26.50px;height:26.50px;background:#fd4446;border-radius:50%;box-shadow:1px 3px 5px rgba(0,0,0,0.42)"></div>
<div class="t" style="left:1154.60px;top:169px;font-size:15.5px;color:#fff;font-weight:400;transform:scaleX(0.8800);">a</div>
<div class="a" style="left:1082.95px;top:241.25px;width:26.50px;height:26.50px;background:#fd4446;border-radius:50%;box-shadow:1px 3px 5px rgba(0,0,0,0.42)"></div>
<div class="t" style="left:1092.58px;top:247px;font-size:15.5px;color:#fff;font-weight:400;transform:scaleX(0.8800);">c</div>
<div class="a" style="left:0.00px;top:0.00px;width:1264.00px;height:1.00px;background:#000"></div>
<div class="a" style="left:0.00px;top:0.00px;width:1.00px;height:628.00px;background:#000"></div>
<div class="a" style="left:1263.00px;top:0.00px;width:1.00px;height:628.00px;background:#000"></div>
<div class="a" style="left:0.00px;top:627.00px;width:1264.00px;height:1.00px;background:#000"></div>

</body></html>
